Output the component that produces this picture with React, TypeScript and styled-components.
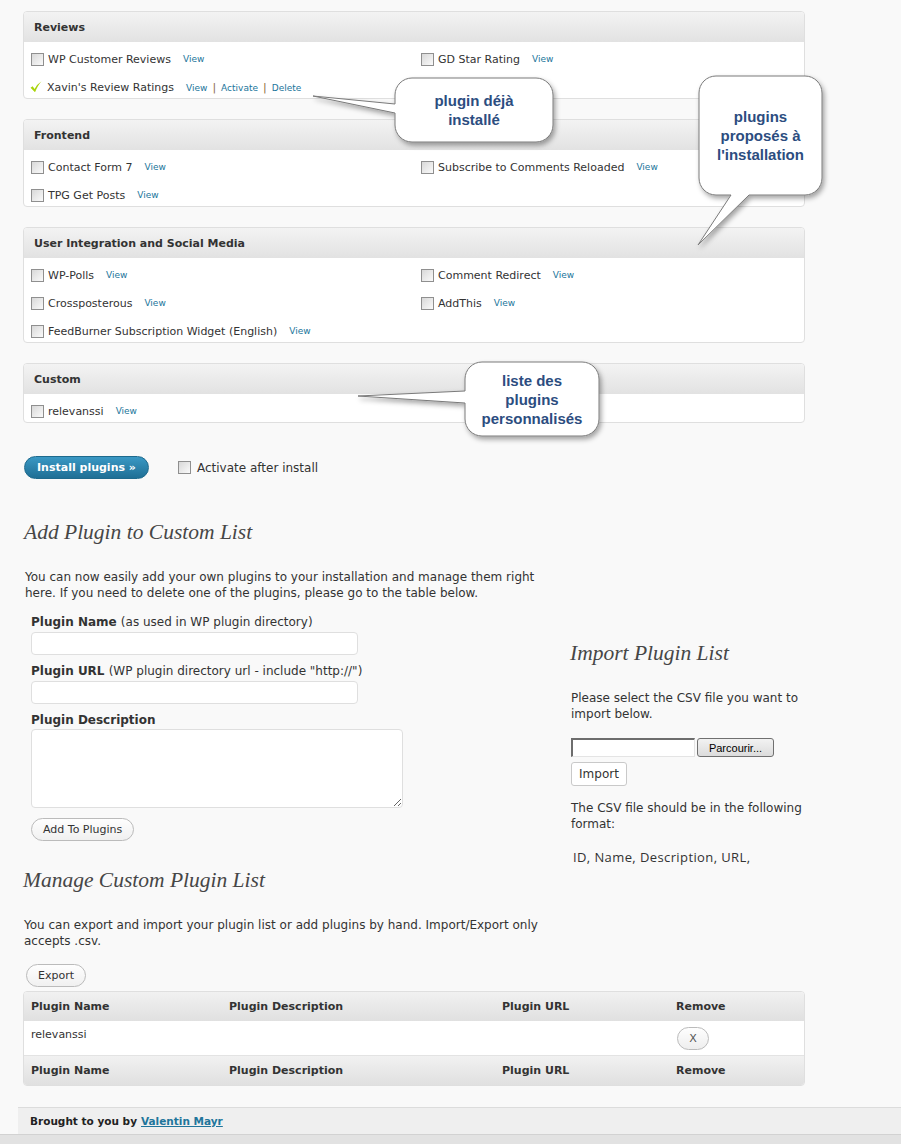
import React from "react";
import styled, { createGlobalStyle } from "styled-components";

const GlobalStyle = createGlobalStyle`
  html, body {
    margin: 0;
    padding: 0;
    background: #f9f9f9;
  }
  body {
    font-family: "DejaVu Sans", Verdana, sans-serif;
    font-size: 11px;
    color: #333;
  }
`;

const linkBlue = "#21759b";

const Page = styled.div`
  position: relative;
  min-height: 1144px;
  display: flex;
  flex-direction: column;
`;

const Wrap = styled.div`
  padding: 11px 0 0 18px;
  flex: 1;
`;

const Content = styled.div`
  padding-left: 5px;
  width: 782px;
`;

/* ---------- plugin panels ---------- */

const Panel = styled.div`
  border: 1px solid #dfdfdf;
  border-radius: 4px;
  background: #fff;
  margin-bottom: 20px;
  overflow: hidden;
`;

const PanelHead = styled.div`
  height: 30px;
  display: flex;
  align-items: center;
  padding-left: 10px;
  background: linear-gradient(to bottom, #f3f3f3, #e2e2e2);
  font-weight: bold;
  font-size: 11px;
  color: #333;
`;

const PanelBody = styled.div`
  display: grid;
  grid-template-columns: 390px 1fr;
  padding-left: 7px;
`;

const Item = styled.div`
  box-sizing: border-box;
  height: 28px;
  padding-top: 6px;
  display: flex;
  align-items: center;
`;

const Check = styled.input.attrs({ type: "checkbox" })`
  appearance: none;
  width: 13px;
  height: 13px;
  margin: 0;
  border: 1px solid #8f8f8f;
  background: linear-gradient(135deg, #d8d8d8, #fafafa);
  flex: none;
`;

const ItemName = styled.span<{ $installed?: boolean }>`
  margin-left: ${(p) => (p.$installed ? "5px" : "4px")};
  font-size: 11px;
  color: #333;
`;

const Links = styled.span`
  margin-left: 12px;
  font-size: 9px;
  color: ${linkBlue};
`;

const Sep = styled.span`
  color: #8b6a3e;
  font-size: 11px;
  margin: 0 5px;
`;

const CheckMark = () => (
  <svg width="12" height="12" viewBox="0 0 11 11" style={{ marginLeft: -1, flex: "none" }}>
    <path d="M0.5 6.2 L2.4 4.9 L4.2 7.3 Q6.6 2.8 10.6 0.3 Q7.4 3.6 4.6 10.4 Z" fill="#a9d40b" />
  </svg>
);

type Plugin = { name: string; installed?: boolean };

const PluginPanel = ({ title, plugins }: { title: string; plugins: Plugin[] }) => (
  <Panel>
    <PanelHead>{title}</PanelHead>
    <PanelBody>
      {plugins.map((p) => (
        <Item key={p.name}>
          {p.installed ? <CheckMark /> : <Check />}
          <ItemName $installed={p.installed}>{p.name}</ItemName>
          {p.installed ? (
            <Links>
              View<Sep>|</Sep>Activate<Sep>|</Sep>Delete
            </Links>
          ) : (
            <Links>View</Links>
          )}
        </Item>
      ))}
    </PanelBody>
  </Panel>
);

/* ---------- install row ---------- */

const InstallRow = styled.div`
  display: flex;
  align-items: center;
  margin-top: 33px;
  padding-left: 1px;
`;

const InstallButton = styled.button`
  height: 23px;
  padding: 0 12px;
  border: 1px solid #1e6a8d;
  border-radius: 12px;
  background: linear-gradient(to bottom, #3a98c4, #1f6f95);
  color: #fff;
  font-family: "DejaVu Sans", Verdana, sans-serif;
  font-weight: bold;
  font-size: 11px;
`;

const ActivateLabel = styled.label`
  display: flex;
  align-items: center;
  margin-left: 29px;
  font-size: 12px;
  color: #333;
  gap: 6px;
`;

/* ---------- forms ---------- */

const Columns = styled.div`
  display: flex;
  margin-top: 40px;
`;

const LeftCol = styled.div`
  flex: none;
  width: 545px;
  padding-left: 2px;
`;

const RightCol = styled.div`
  flex: none;
  width: 236px;
  padding: 121px 0 0 1px;
`;

const Heading = styled.h2`
  margin: 0 0 0 -1px;
  font-family: "Liberation Serif", "Times New Roman", serif;
  font-style: italic;
  font-weight: normal;
  font-size: 21.5px;
  line-height: 26px;
  color: #464646;
`;

const Para = styled.p<{ $mt?: number }>`
  margin: ${(p) => p.$mt ?? 24}px 0 0;
  max-width: 540px;
  font-size: 12px;
  line-height: 16px;
  color: #333;
`;

const Form = styled.div`
  padding-left: 6px;
  margin-top: 13px;
  display: flex;
  flex-direction: column;
  align-items: flex-start;
`;

const FieldLabel = styled.div<{ $mt?: number }>`
  margin-top: ${(p) => p.$mt ?? 0}px;
  font-size: 12px;
  line-height: 16px;
  font-weight: bold;
  color: #333;
  span {
    font-weight: normal;
  }
`;

const TextInput = styled.input`
  box-sizing: border-box;
  width: 327px;
  height: 23px;
  margin-top: 2px;
  border: 1px solid #dfdfdf;
  border-radius: 4px;
  background: #fff;
`;

const TextArea = styled.textarea`
  box-sizing: border-box;
  width: 372px;
  height: 79px;
  margin-top: 1px;
  border: 1px solid #dfdfdf;
  border-radius: 4px;
  background: #fff;
`;

const PillButton = styled.button<{ $mt?: number; $ml?: number }>`
  margin: ${(p) => p.$mt ?? 0}px 0 0 ${(p) => p.$ml ?? 0}px;
  height: 23px;
  padding: 0 11px;
  border: 1px solid #bbb;
  border-radius: 12px;
  background: linear-gradient(to bottom, #fefefe, #f0f0f0);
  font-family: "DejaVu Sans", Verdana, sans-serif;
  font-size: 11px;
  color: #333;
`;

const FileRow = styled.div`
  display: flex;
  margin-top: 16px;
  height: 19px;
`;

const FileBox = styled.div`
  box-sizing: border-box;
  width: 124px;
  height: 19px;
  background: #fff;
  border-top: 2px solid #6d6d6d;
  border-left: 2px solid #6d6d6d;
  border-right: 1px solid #e4e4e4;
  border-bottom: 1px solid #e4e4e4;
`;

const BrowseButton = styled.div`
  box-sizing: border-box;
  margin-left: 2px;
  width: 77px;
  height: 19px;
  display: flex;
  align-items: center;
  justify-content: center;
  border: 1px solid #707070;
  border-radius: 3px;
  background: linear-gradient(to bottom, #f2f2f2, #dcdcdc);
  font-family: "Liberation Sans", Arial, sans-serif;
  font-size: 11px;
  color: #000;
`;

const ImportButton = styled.button`
  margin-top: 5px;
  height: 24px;
  width: 56px;
  padding: 0;
  border: 1px solid #c9c9c9;
  border-radius: 3px;
  background: #fff;
  font-family: "DejaVu Sans", Verdana, sans-serif;
  font-size: 12px;
  color: #333;
`;

const Format = styled.div`
  margin-top: 17px;
  padding-left: 2px;
  font-family: "Open Sans", sans-serif;
  font-size: 13px;
  letter-spacing: 0.4px;
  line-height: 16px;
  color: #333;
`;

/* ---------- manage table ---------- */

const Manage = styled.div`
  margin-top: 2px;
  padding-left: 1px;
`;

const Table = styled.table`
  margin-top: 4px;
  margin-left: -1px;
  width: 782px;
  table-layout: fixed;
  border-collapse: separate;
  border-spacing: 0;
  border: 1px solid #dfdfdf;
  border-radius: 4px;
  background: #fff;
  overflow: hidden;
`;

const Th = styled.th`
  height: 29px;
  padding: 0 7px;
  text-align: left;
  font-size: 11px;
  font-weight: bold;
  color: #333;
  background: linear-gradient(to bottom, #f1f1f1, #e0e0e0);
`;

const Td = styled.td`
  height: 35px;
  box-sizing: border-box;
  padding: 7px 7px 0;
  vertical-align: top;
  font-size: 11px;
  color: #333;
  border-bottom: 1px solid #e3e3e3;
`;

const RemoveButton = styled.button`
  margin: -1px 0 0 1px;
  width: 32px;
  height: 23px;
  padding: 0;
  border: 1px solid #bbb;
  border-radius: 12px;
  background: linear-gradient(to bottom, #fefefe, #eeeeee);
  font-family: "DejaVu Sans", Verdana, sans-serif;
  font-size: 11px;
  color: #555;
`;

/* ---------- footer ---------- */

const Footer = styled.div`
  margin: 21px 0 0 18px;
  height: 26px;
  border-top: 1px solid #dcdcdc;
  background: #efefef;
  display: flex;
  align-items: center;
  padding-left: 12px;
  font-family: "DejaVu Sans", Verdana, sans-serif;
  font-weight: bold;
  font-size: 10.5px;
  color: #222;
  a {
    color: ${linkBlue};
    margin-left: 4px;
  }
`;

const BottomBand = styled.div`
  height: 9px;
  border-top: 1px solid #d2d2d2;
  background: #e2e2e2;
`;

/* ---------- callouts ---------- */

const BubbleWrap = styled.div`
  position: absolute;
  display: flex;
  align-items: center;
  justify-content: center;
  text-align: center;
  font-family: "Liberation Sans", Arial, sans-serif;
  font-weight: bold;
  font-size: 15px;
  line-height: 19px;
  color: #2c4d7f;
`;

const BubbleText = styled.div`
  position: relative;
`;

type BubbleProps = {
  x: number;
  y: number;
  w: number;
  h: number;
  side: "left" | "bottom";
  a: number;
  b: number;
  tip: [number, number];
  children: React.ReactNode;
};

const Bubble = ({ x, y, w, h, side, a, b, tip, children }: BubbleProps) => {
  const r = 17;
  const tx = tip[0] - x;
  const ty = tip[1] - y;
  let d = `M${r},0 H${w - r} A${r},${r} 0 0 1 ${w},${r} V${h - r} A${r},${r} 0 0 1 ${w - r},${h}`;
  if (side === "bottom") d += ` H${b} L${tx},${ty} L${a},${h}`;
  d += ` H${r} A${r},${r} 0 0 1 0,${h - r}`;
  if (side === "left") d += ` V${b} L${tx},${ty} L0,${a}`;
  d += ` V${r} A${r},${r} 0 0 1 ${r},0 Z`;
  const padL = Math.max(8, -tx + 4);
  const padB = Math.max(10, ty - h + 4);
  const sw = w + padL + 12;
  const sh = h + 8 + padB;
  return (
    <BubbleWrap style={{ left: x, top: y, width: w, height: h }}>
      <svg
        width={sw}
        height={sh}
        style={{ position: "absolute", left: -padL, top: -8, overflow: "visible" }}
      >
        <defs>
          <filter id={`sh${x}`} x="-20%" y="-20%" width="140%" height="140%">
            <feDropShadow dx="2" dy="3" stdDeviation="2.5" floodColor="#000" floodOpacity="0.35" />
          </filter>
        </defs>
        <g transform={`translate(${padL},8)`}>
          <path d={d} fill="#fff" stroke="#7a7a7a" strokeWidth="1" filter={`url(#sh${x})`} />
        </g>
      </svg>
      <BubbleText>{children}</BubbleText>
    </BubbleWrap>
  );
};

/* ---------- data ---------- */

const reviews: Plugin[] = [
  { name: "WP Customer Reviews" },
  { name: "GD Star Rating" },
  { name: "Xavin's Review Ratings", installed: true },
];
const frontend: Plugin[] = [
  { name: "Contact Form 7" },
  { name: "Subscribe to Comments Reloaded" },
  { name: "TPG Get Posts" },
];
const social: Plugin[] = [
  { name: "WP-Polls" },
  { name: "Comment Redirect" },
  { name: "Crossposterous" },
  { name: "AddThis" },
  { name: "FeedBurner Subscription Widget (English)" },
];
const custom: Plugin[] = [{ name: "relevanssi" }];

const App = () => {
  return (
    <Page>
      <GlobalStyle />
      <Wrap>
        <Content>
          <PluginPanel title="Reviews" plugins={reviews} />
          <PluginPanel title="Frontend" plugins={frontend} />
          <PluginPanel title="User Integration and Social Media" plugins={social} />
          <PluginPanel title="Custom" plugins={custom} />

          <InstallRow>
            <InstallButton>Install plugins »</InstallButton>
            <ActivateLabel>
              <Check />
              Activate after install
            </ActivateLabel>
          </InstallRow>

          <Columns>
            <LeftCol>
              <Heading>Add Plugin to Custom List</Heading>
              <Para>
                You can now easily add your own plugins to your installation and manage them right
                here. If you need to delete one of the plugins, please go to the table below.
              </Para>
              <Form>
                <FieldLabel>
                  Plugin Name <span>(as used in WP plugin directory)</span>
                </FieldLabel>
                <TextInput />
                <FieldLabel $mt={8}>
                  Plugin URL <span>(WP plugin directory url - include "http://")</span>
                </FieldLabel>
                <TextInput />
                <FieldLabel $mt={8}>Plugin Description</FieldLabel>
                <TextArea />
                <PillButton $mt={10}>Add To Plugins</PillButton>
              </Form>
            </LeftCol>
            <RightCol>
              <Heading>Import Plugin List</Heading>
              <Para>Please select the CSV file you want to import below.</Para>
              <FileRow>
                <FileBox />
                <BrowseButton>Parcourir...</BrowseButton>
              </FileRow>
              <ImportButton>Import</ImportButton>
              <Para $mt={14}>The CSV file should be in the following format:</Para>
              <Format>ID, Name, Description, URL,</Format>
            </RightCol>
          </Columns>

          <Manage>
            <Heading>Manage Custom Plugin List</Heading>
            <Para>
              You can export and import your plugin list or add plugins by hand. Import/Export only
              accepts .csv.
            </Para>
            <PillButton $mt={15} $ml={2}>
              Export
            </PillButton>
            <Table>
              <colgroup>
                <col style={{ width: 198 }} />
                <col style={{ width: 273 }} />
                <col style={{ width: 174 }} />
                <col />
              </colgroup>
              <thead>
                <tr>
                  <Th>Plugin Name</Th>
                  <Th>Plugin Description</Th>
                  <Th>Plugin URL</Th>
                  <Th>Remove</Th>
                </tr>
              </thead>
              <tbody>
                <tr>
                  <Td>relevanssi</Td>
                  <Td></Td>
                  <Td></Td>
                  <Td>
                    <RemoveButton>X</RemoveButton>
                  </Td>
                </tr>
              </tbody>
              <tfoot>
                <tr>
                  <Th>Plugin Name</Th>
                  <Th>Plugin Description</Th>
                  <Th>Plugin URL</Th>
                  <Th>Remove</Th>
                </tr>
              </tfoot>
            </Table>
          </Manage>
        </Content>
      </Wrap>

      <Footer>
        Brought to you by <a href="#">Valentin Mayr</a>
      </Footer>
      <BottomBand />

      <Bubble x={395} y={78} w={158} h={64} side="left" a={26} b={35} tip={[313, 96]}>
        plugin déjà
        <br />
        installé
      </Bubble>
      <Bubble x={699} y={76} w={123} h={119} side="bottom" a={32} b={50} tip={[698, 245]}>
        plugins
        <br />
        proposés à
        <br />
        l'installation
      </Bubble>
      <Bubble x={465} y={362} w={134} h={74} side="left" a={29} b={41} tip={[358, 396]}>
        liste des
        <br />
        plugins
        <br />
        personnalisés
      </Bubble>
    </Page>
  );
};

export default App;
